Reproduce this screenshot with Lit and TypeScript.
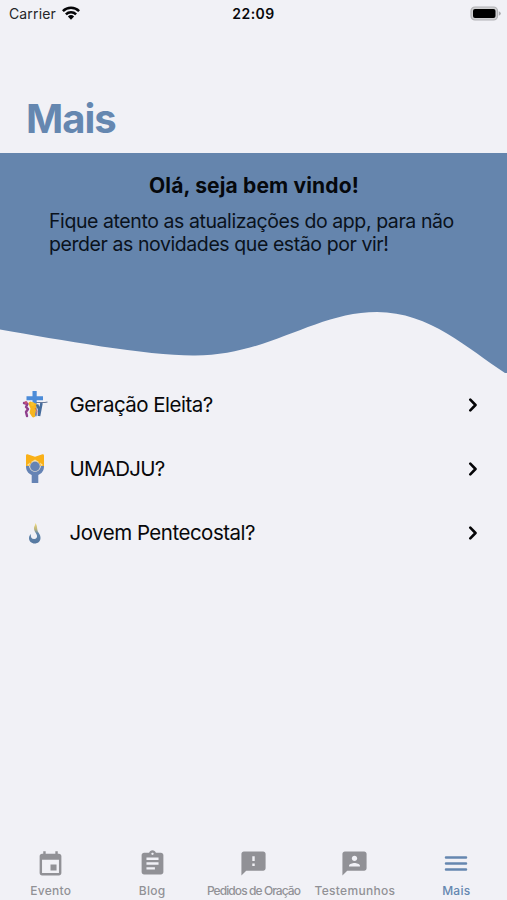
import { LitElement, html, svg, css } from "lit";
import { customElement, property } from "lit/decorators.js";

const TAB_PATHS: Record<string, string> = {
  event:
    "M17 12h-5v5h5v-5zM16 1v2H8V1H6v2H5c-1.11 0-1.99.9-1.99 2L3 19c0 1.1.89 2 2 2h14c1.1 0 2-.9 2-2V5c0-1.1-.9-2-2-2h-1V1h-2zm3 18H5V8h14v11z",
  blog:
    "M19 3h-4.180C14.400 1.840 13.300 1 12 1c-1.300 0-2.400.84-2.820 2H5c-1.100 0-2 .9-2 2v14c0 1.100.9 2 2 2h14c1.100 0 2-.9 2-2V5c0-1.100-.9-2-2-2zm-7 0c.55 0 1 .45 1 1s-.45 1-1 1-1-.45-1-1 .45-1 1-1zm2 14H7v-2h7v2zm3-4H7v-2h10v2zm0-4H7V7h10v2z",
  prayer:
    "M20 2H4c-1.100 0-1.990.9-1.990 2L2 22l4-4h14c1.100 0 2-.9 2-2V4c0-1.100-.9-2-2-2zm-7 12h-2v-2h2v2zm0-4h-2V6h2v4z",
  person:
    "M20 2H4c-1.100 0-1.990.9-1.990 2L2 22l4-4h14c1.100 0 2-.9 2-2V4c0-1.100-.9-2-2-2zm-8 3.500c1.240 0 2.250 1.010 2.250 2.250S13.240 10 12 10 9.750 8.990 9.750 7.750 10.760 5.500 12 5.500zM16.500 14.500h-9v-.75c0-1.500 3-2.250 4.500-2.250s4.500.75 4.500 2.250v.75z",
};

const LOGOS = {
  geracao: svg`
    <path fill="#4b8bd8" d="M10.500 0h4.200v5.300h6.300v4h-6.300v16h-4.200V9.300H4.500v-4h6z"/>
    <path fill="none" stroke="#8f3f8c" stroke-width="2.400" stroke-linecap="round" stroke-linejoin="round" d="M2 12l3.500 1-1.500 3 2 2-2 3 1 4"/>
    <circle cx="4" cy="11.500" r="1.500" fill="#c64f78"/>
    <path fill="none" stroke="#f6b51f" stroke-width="3.800" stroke-linecap="round" stroke-linejoin="round" d="M8.500 12.500l2 5-1 4 2 3M13 14l-1.500 8"/>
    <circle cx="10.500" cy="13" r="2" fill="#f8c12b"/>
    <path fill="none" stroke="#456b9c" stroke-width="2.600" d="M15 13.500l2 4.500v7M19.500 12l-2.500 13"/>
    <path fill="none" stroke="#66799a" stroke-width="1.200" d="M14 11.500h9l2.500-.5"/>
    <path fill="none" stroke="#d35a57" stroke-width=".8" d="M13 17l2 3-1 4"/>`,
  umadju: svg`
    <path fill="#f9b017" d="M0 1.500Q0 0 1.500.2L9 2.800 16.500.2Q18 0 18 1.500V12H0z"/>
    <path fill="#f6dfa7" d="M1 11l3-2.500-.8 3.500zM17 11l-3-2.500.8 3.500zM5 8l4-2.500L13 8z"/>
    <path fill="#6583b4" d="M0 12h3.200a5.800 5.800 0 0 0 11.600 0H18c0 4.800-2 7.200-5.700 9v7.500q0 .5-.5.5H6.200q-.5 0-.5-.5V21C2 19.200 0 16.800 0 12z"/>
    <circle cx="9" cy="12.300" r="5.300" fill="#c9c7bd"/>
    <circle cx="9" cy="12.500" r="4.700" fill="#6583b4"/>`,
  jovem: svg`
    <defs><linearGradient id="flame" x1="0" y1="0" x2="0" y2="1">
      <stop offset="0" stop-color="#f3dc7a"/><stop offset=".3" stop-color="#bdb57c"/>
      <stop offset=".5" stop-color="#6187ad"/><stop offset="1" stop-color="#55779f"/>
    </linearGradient></defs>
    <path fill="url(#flame)" d="M6.500 0C9 4 7.500 6.500 9.500 9.500c1.700 2.500 2 3.500 2 5.500 0 3.300-2.500 5.500-5.800 5.500S0 18 0 15.200c0-2 1-3.300 1.800-4.200-.2 3.200.7 5 3.400 5 2 0 3.100-1.300 2.800-3.200C7.600 10.200 4.800 8.500 5 5c.1-2 1.300-2.600 1.500-5z"/>`,
};

@customElement("list-row")
class ListRow extends LitElement {
  @property() label = "";
  @property() logo: keyof typeof LOGOS = "geracao";
  static styles = css`
    :host { display: flex; align-items: center; height: 64px; }
    .logo { width: 26px; height: 30px; margin: 0 0 2px 22px; display: flex; align-items: center; justify-content: center; }
    .logo svg { display: block; overflow: visible; }
    .label { margin-left: 21.500px; flex: 1; font-size: 20.500px; line-height: 26px; }
    .geracao { letter-spacing: -0.52px; }
    .umadju { letter-spacing: -0.75px; }
    .jovem { letter-spacing: -0.5px; }
    .chevron { margin-right: 29px; display: block; }
  `;
  render() {
    const size = { geracao: [26, 27], umadju: [18, 29], jovem: [12, 19] }[this.logo];
    return html`
      <div class="logo">
        <svg width=${size[0]} height=${size[1]} viewBox="0 0 ${size[0]} ${size[1]}">${LOGOS[this.logo]}</svg>
      </div>
      <div class="label"><span class=${this.logo}>${this.label}</span></div>
      <svg class="chevron" width="10" height="14" viewBox="0 0 10 14">
        <path d="M2.300 1.700L7.500 7l-5.200 5.300" fill="none" stroke="#050507" stroke-width="2.600" stroke-linecap="round" stroke-linejoin="round"/>
      </svg>`;
  }
}

@customElement("app-root")
class AppRoot extends LitElement {
  static styles = css`
    :host {
      display: flex; flex-direction: column; box-sizing: border-box;
      width: 100%; height: 900px; overflow: hidden;
      background: #f1f1f6; color: #08080a;
      font-family: Inter, "Liberation Sans", sans-serif;
    }
    .status { display: grid; grid-template-columns: 1fr auto 1fr; align-items: center; height: 26px; }
    .carrier { display: flex; align-items: center; gap: 6px; padding-left: 9px; font-size: 14px; color: #252528; }
    .carrier span { letter-spacing: 0.14px; }
    .time { font-size: 14px; font-weight: 600; letter-spacing: 0.5px; }
    .battery { justify-self: end; margin-right: 6px; }
    svg { display: block; }
    .heading { height: 127px; box-sizing: border-box; padding: 68px 0 0 26px; }
    h1 { margin: 0; font-size: 40px; line-height: 50px; font-weight: 700; letter-spacing: -1px; color: #6587b0; }
    .banner { display: grid; height: 220px; }
    .banner > * { grid-area: 1 / 1; }
    .welcome { padding: 20px 0 0 49px; color: #05080c; }
    h2 { margin: 0 48px 0 0; text-align: center; font-size: 21px; line-height: 26px; font-weight: 700; letter-spacing: 0.15px; }
    p { margin: 11px 0 0; font-size: 19.500px; line-height: 23px; white-space: nowrap; letter-spacing: -0.42px; color: #0a121c; }
    .rows { flex: 1; }
    .tabs { display: grid; grid-template-columns: repeat(5, 1fr); height: 54px; color: #919196; }
    .tab { display: flex; flex-direction: column; align-items: center; font-size: 12px; font-weight: 500; line-height: 16px; white-space: nowrap; }
    .tab svg { margin: 3px 0 5px; }
    .tab svg.event { margin: 4px 0; }
    .tab svg.menu { margin: 2px 0 5px; }
    .tab.active { color: #6587b0; }
    .evento { letter-spacing: 0.25px; }
    .pedidos { letter-spacing: -0.92px; }
    .testemunhos { letter-spacing: 0.3px; }
  `;

  tab(icon: string, label: string, cls: string) {
    return html`<div class="tab">
      <svg class=${icon} width="29" height="29" viewBox="0 0 24 24"><path fill="currentColor" d=${TAB_PATHS[icon]} /></svg>
      <span class=${cls}>${label}</span>
    </div>`;
  }

  render() {
    return html`
      <div class="status">
        <div class="carrier">
          <span>Carrier</span>
          <svg width="18" height="14" viewBox="0 0 18 14">
            <g fill="none" stroke="#050507" stroke-width="2.500">
              <path d="M.9 5.200a11.500 11.500 0 0 1 16.200 0"/>
              <path d="M3.900 8.300a7.200 7.200 0 0 1 10.200 0"/>
            </g>
            <path fill="#050507" d="M9 13.800L5.900 10.500a4.500 4.500 0 0 1 6.200 0z"/>
          </svg>
        </div>
        <div class="time">22:09</div>
        <svg class="battery" width="31" height="15" viewBox="0 0 31 15">
          <rect x="1" y="1" width="26.500" height="13" rx="4" fill="#d0d0d2" stroke="#b2b2b5" stroke-width="1.200"/>
          <rect x="3" y="3" width="22.500" height="9" rx="2" fill="#000"/>
          <path d="M28.800 5.200q2 .8 2 2.300t-2 2.300z" fill="#aaaaad"/>
        </svg>
      </div>
      <div class="heading"><h1>Mais</h1></div>
      <div class="banner">
        <svg width="507" height="220" viewBox="0 153 507 220">
          <path fill="#6585ad" d="M0 153H507V373H505C468 349 430 312 377 312C315 312 270 355 195 355.500C150 356 60 340 0 329.500z"/>
        </svg>
        <div class="welcome">
          <h2>Olá, seja bem vindo!</h2>
          <p>Fique atento as atualizações do app, para não<br />perder as novidades que estão por vir!</p>
        </div>
      </div>
      <div class="rows">
        <list-row logo="geracao" label="Geração Eleita?"></list-row>
        <list-row logo="umadju" label="UMADJU?"></list-row>
        <list-row logo="jovem" label="Jovem Pentecostal?"></list-row>
      </div>
      <div class="tabs">
        ${this.tab("event", "Evento", "evento")}
        ${this.tab("blog", "Blog", "evento")}
        ${this.tab("prayer", "Pedidos de Oração", "pedidos")}
        ${this.tab("person", "Testemunhos", "testemunhos")}
        <div class="tab active">
          <svg class="menu" width="30" height="30" viewBox="0 0 30 30">
            <path d="M5 9.500h20M5 15.500h20M5 21.500h20" stroke="currentColor" stroke-width="2.500" stroke-linecap="round"/>
          </svg>
          <span class="evento">Mais</span>
        </div>
      </div>`;
  }
}
